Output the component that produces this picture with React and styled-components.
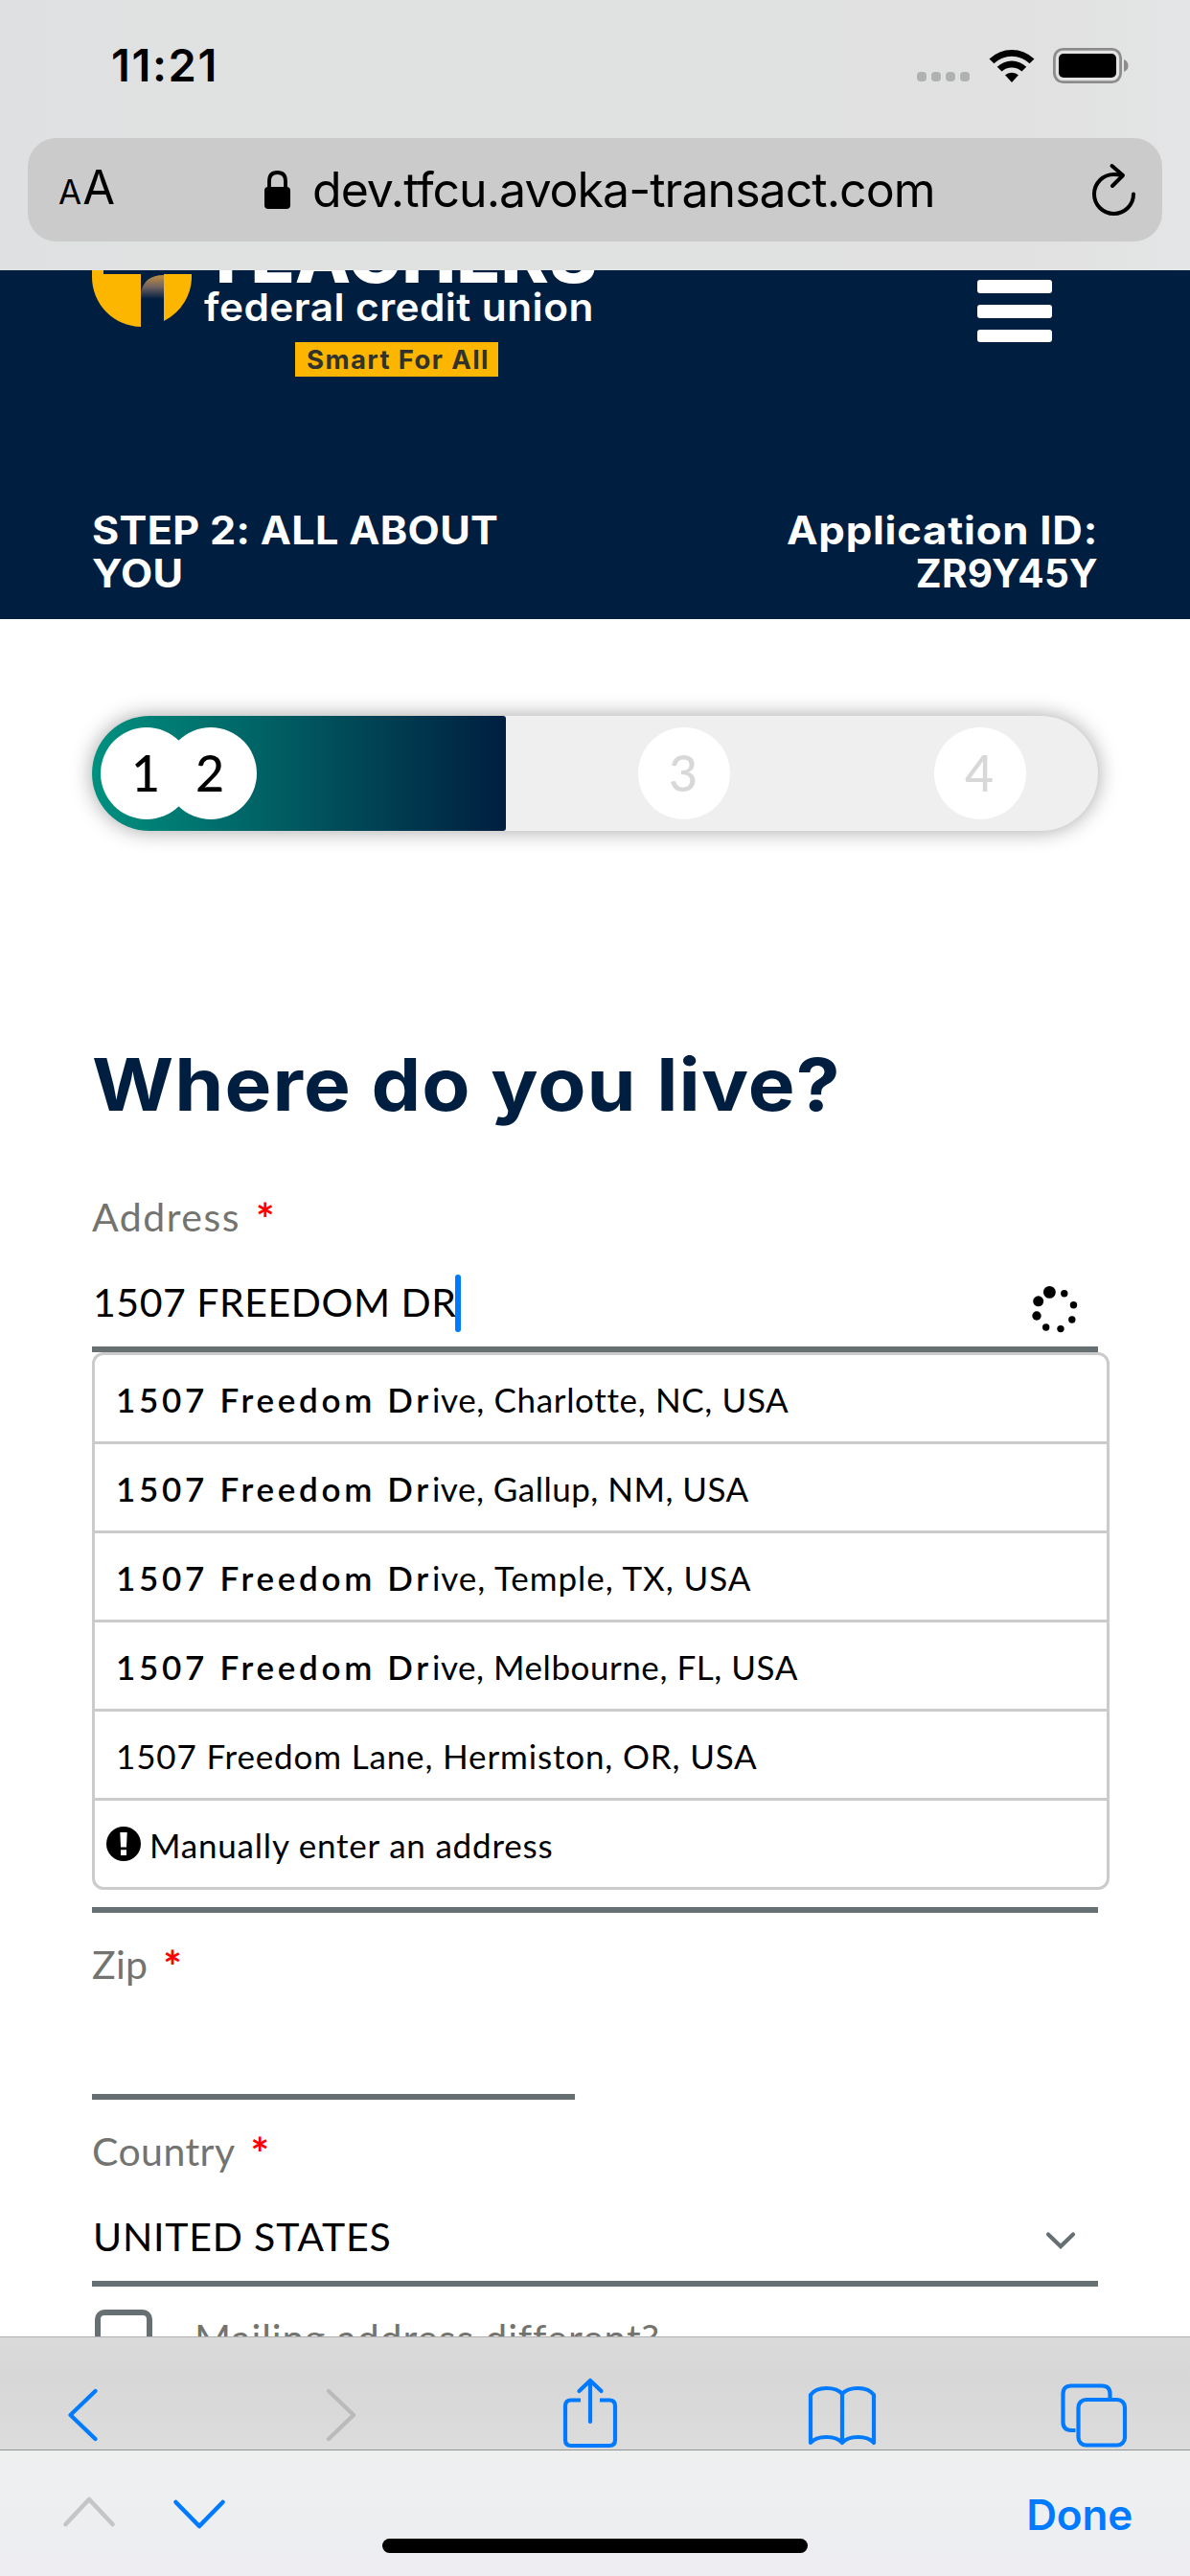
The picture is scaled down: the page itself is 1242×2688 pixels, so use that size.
import React from "react";
import styled, { createGlobalStyle } from "styled-components";

const display = `Inter, "Open Sans", sans-serif`;
const body = `Lato, "Open Sans", sans-serif`;
const navy = "#001e40";
const slate = "#666f71";
const blue = "#007aff";

const Global = createGlobalStyle`
  * { box-sizing: border-box; }
  body { margin: 0; background: #fff; }
`;

const Phone = styled.div`
  width: 1242px;
  height: 2688px;
  display: flex;
  flex-direction: column;
  background: #fff;
  overflow: hidden;
`;

/* ---------- Browser chrome: top ---------- */
const TopChrome = styled.div`
  height: 282px;
  flex: none;
  background: linear-gradient(90deg, #dfe0e1 0, #e0e1e1 160px, #e1e1e1 1080px, #e4e5e6 100%);
`;

const StatusBar = styled.div`
  height: 144px;
  padding: 0 64px 8px 116px;
  display: flex;
  align-items: center;
  justify-content: space-between;
`;

const Clock = styled.span`
  font: 600 47px/60px ${display};
  letter-spacing: 1.6px;
  color: #000;
`;

const StatusIcons = styled.div`
  display: flex;
  align-items: center;
`;

const SignalDots = styled.div`
  display: flex;
  gap: 4.6px;
  margin: 24px 20px 0 0;
`;

const SignalDot = styled.i`
  width: 10.4px;
  height: 10px;
  border-radius: 4px;
  background: #b0b1b1;
`;

const WifiIcon = styled.svg`
  width: 48px;
  height: 37px;
  margin-right: 19px;
`;

const BatteryIcon = styled.svg`
  width: 79px;
  height: 37px;
`;

const AddressBar = styled.div`
  height: 108px;
  margin: 0 29px;
  padding-right: 29px;
  border-radius: 30px;
  background: #cbcbcc;
  display: grid;
  grid-template-columns: 247px 1fr 44px;
  align-items: center;
  color: #000;
  font-family: ${display};
`;

const TextSize = styled.span`
  padding-left: 32px;
  display: flex;
  align-items: baseline;
  gap: 2px;
  line-height: 60px;
`;

const Glyph = styled.span`
  font-size: ${(p) => p.$size}px;
  letter-spacing: -1px;
`;

const Location = styled.div`
  display: flex;
  align-items: center;
`;

const LockIcon = styled.svg`
  width: 27px;
  height: 40px;
  margin-right: 23px;
`;

const Url = styled.span`
  font-size: 50px;
  line-height: 60px;
  letter-spacing: -0.97px;
  white-space: nowrap;
`;

const ReloadIcon = styled.svg`
  width: 46px;
  height: 56px;
`;

/* ---------- Site header ---------- */
const Viewport = styled.div`
  flex: 1;
  min-height: 0;
  overflow: hidden;
  background: #fff;
`;

const Header = styled.header`
  height: 364px;
  overflow: hidden;
  background: ${navy};
  color: #fff;
  font-family: ${display};
`;

const HeaderTop = styled.div`
  height: 248px;
  padding: 0 144px 0 96px;
  display: flex;
  justify-content: space-between;
  align-items: flex-start;
`;

const Brand = styled.div`
  display: flex;
  align-items: flex-start;
`;

const Emblem = styled.svg`
  width: 104px;
  height: 60px;
  margin-right: 13px;
  flex: none;
`;

const Wordmark = styled.div`
  display: flex;
  flex-direction: column;
  align-items: flex-start;
`;

const BrandName = styled.span`
  margin: -42px 0 0 -3px;
  font-weight: 800;
  font-size: 76px;
  line-height: 54px;
`;

const BrandKind = styled.span`
  margin-top: 7px;
  font-weight: 600;
  font-size: 40px;
  line-height: 40px;
  letter-spacing: 0.4px;
  white-space: nowrap;
  transform: scaleX(1.06);
  transform-origin: left;
`;

const Tagline = styled.span`
  width: 212px;
  height: 36px;
  margin: 16px 0 0 95px;
  padding-left: 12px;
  background: #fcb600;
  color: #32322c;
  font-weight: 700;
  font-size: 27.5px;
  line-height: 37px;
  letter-spacing: 1.4px;
  white-space: nowrap;
`;

const MenuButton = styled.div`
  width: 78px;
  padding-top: 10px;
  display: flex;
  flex-direction: column;
  gap: 12px;
`;

const MenuBar = styled.i`
  height: 13.8px;
  border-radius: 3px;
  background: #fff;
`;

const HeaderInfo = styled.div`
  padding: 1px 96px 0;
  display: flex;
  justify-content: space-between;
  font-weight: 700;
  font-size: 40.5px;
  line-height: 45px;
`;

const StepTitle = styled.div`
  width: 430px;
  letter-spacing: 0.3px;
  transform: scaleX(1.065);
  transform-origin: left;
`;

const AppId = styled.div`
  display: flex;
  flex-direction: column;
  align-items: flex-end;
`;

const AppIdLabel = styled.span`
  letter-spacing: 0.7px;
  transform: scaleX(1.08);
  transform-origin: right;
`;

const AppIdValue = styled.span`
  letter-spacing: 0.3px;
`;

/* ---------- Form ---------- */
const Main = styled.main`
  padding: 101px 96px 0;
`;

const Progress = styled.div`
  height: 120px;
  border-radius: 60px;
  background: #efefef;
  box-shadow: 0 0 22px rgba(0, 0, 0, 0.36);
  display: flex;
  align-items: center;
`;

const ProgressFill = styled.div`
  width: 432px;
  height: 120px;
  padding-left: 9px;
  border-radius: 60px 3px 3px 60px;
  background: linear-gradient(90deg, #00917f, ${navy});
  display: flex;
  align-items: center;
`;

const StepDot = styled.span`
  width: 96px;
  height: 96px;
  flex: none;
  margin-left: ${(p) => p.$offset}px;
  border-radius: 50%;
  background: #fff;
  color: ${(p) => (p.$done ? "#000" : "#d8d8d8")};
  font: 500 52px/94px ${body};
  text-align: center;
  text-indent: -2px;
`;

const Heading = styled.h1`
  margin: 219px 0 70px;
  color: ${navy};
  font: 700 76px/90px ${display};
  letter-spacing: 1px;
  white-space: nowrap;
  transform: scaleX(1.08);
  transform-origin: left;
`;

const Field = styled.div`
  position: relative;
  width: ${(p) => p.$width || "auto"};
  margin-bottom: 30px;
`;

const Label = styled.div`
  height: 48px;
  display: flex;
  color: #73736f;
  font: 400 41px/48px ${body};
  letter-spacing: ${(p) => p.$spacing}px;
`;

const Required = styled.span`
  margin-left: 16px;
  color: #f00;
  font-weight: 700;
  font-size: 46px;
  line-height: 52px;
`;

const Control = styled.div`
  height: 117px;
  padding-top: 19px;
  border-bottom: 6px solid ${slate};
  display: flex;
  align-items: center;
  justify-content: space-between;
  color: #000;
  font: 400 41px/48px ${body};
  letter-spacing: ${(p) => p.$spacing || 0}px;
`;

const Value = styled.span`
  display: flex;
  align-items: center;
  padding-left: 1px;
`;

const Caret = styled.i`
  width: 6px;
  height: 60px;
  margin: 2px 0 0 -2px;
  border-radius: 3px;
  background: ${blue};
`;

const Spinner = styled.svg`
  width: 58px;
  height: 58px;
  margin: 16px 16px 0 0;
`;

const SelectArrow = styled.svg`
  width: 32px;
  height: 20px;
  margin: 8px 23px 0 0;
`;

const Suggestions = styled.ul`
  position: absolute;
  top: 100%;
  left: 0;
  width: 1062px;
  margin: 0;
  padding: 0;
  list-style: none;
  border: 3px solid #cbcbcb;
  border-radius: 12px;
  background: #fff;
`;

const Suggestion = styled.li`
  height: 93px;
  padding: 2px 0 0 ${(p) => (p.$manual ? 12 : 22)}px;
  border-bottom: 3px solid #cbcbcb;
  display: flex;
  align-items: center;
  color: #000;
  font: 400 35px/44px ${body};
  letter-spacing: ${(p) => p.$spacing}px;
  white-space: pre;

  &:last-child {
    height: 90px;
    border-bottom: 0;
  }
`;

const Match = styled.b`
  font-weight: 600;
  letter-spacing: 3.7px;
`;

const AlertIcon = styled.svg`
  width: 36px;
  height: 36px;
  margin: -2px 9px 0 0;
`;

const CoveredFields = styled.div`
  height: 585px;
  margin: -30px 0 30px;
  border-bottom: 6px solid ${slate};
`;

const CheckRow = styled.div`
  margin-top: -6px;
  padding-left: 3px;
  display: flex;
  gap: 44px;
  color: #73736f;
  font: 400 41px/60px ${body};
  letter-spacing: 0.84px;
`;

const Checkbox = styled.span`
  width: 60px;
  height: 60px;
  border: 6px solid ${slate};
  border-radius: 10px;
`;

/* ---------- Browser chrome: bottom ---------- */
const Toolbar = styled.nav`
  height: 118px;
  flex: none;
  padding: 0 67px;
  border-top: 1px solid #b0b0b0;
  background: linear-gradient(#dadada, #d7d7d7 35%, #dcdcdc);
  display: grid;
  grid-template-columns: 269px 248px 256px 263px 1fr;
  align-items: end;
`;

const ToolIcon = styled.svg`
  width: ${(p) => p.$w}px;
  height: 76px;
  fill: none;
  stroke: ${(p) => (p.$muted ? "#bababa" : blue)};
  stroke-width: 4.2;
  stroke-linecap: round;
  stroke-linejoin: round;
`;

const InputAccessory = styled.div`
  height: 132px;
  flex: none;
  border-top: 1px solid #909292;
  background: linear-gradient(#eef0f0, #ededf1);
  display: flex;
  flex-direction: column;
  align-items: center;
`;

const AccessoryRow = styled.div`
  width: 100%;
  height: 92px;
  padding: 42px 60px 0 62px;
  display: flex;
  align-items: center;
`;

const StepArrow = styled.svg`
  width: 62px;
  height: 44px;
  margin-right: 53px;
  fill: none;
  stroke: ${(p) => (p.$muted ? "#c4c5c6" : blue)};
  stroke-width: 4.6;
  stroke-linecap: round;
  stroke-linejoin: round;
`;

const Done = styled.span`
  margin-left: auto;
  color: ${blue};
  font: 600 44px/44px ${display};
  letter-spacing: -0.2px;
`;

const HomeIndicator = styled.i`
  width: 444px;
  height: 15px;
  border-radius: 8px;
  background: #000;
`;

const matches = [
  { rest: "ive, Charlotte, NC, USA", spacing: 0.65 },
  { rest: "ive, Gallup, NM, USA", spacing: 0.5 },
  { rest: "ive, Temple, TX, USA", spacing: 0.95 },
  { rest: "ive, Melbourne, FL, USA", spacing: 0.55 },
];

const spinnerDots = [
  [23.4, 10.4, 6.4],
  [11.7, 19.8, 5.5],
  [10, 35, 4.7],
  [19.7, 47, 3.7],
  [35, 48.6, 3.7],
  [46.8, 39, 3.7],
  [48.5, 23.7, 3.7],
  [38.8, 11.8, 3.7],
];

function FieldLabel({ children, spacing }) {
  return (
    <Label $spacing={spacing}>
      {children}
      <Required>*</Required>
    </Label>
  );
}

export default function App() {
  return (
    <Phone>
      <Global />
      <TopChrome>
        <StatusBar>
          <Clock>11:21</Clock>
          <StatusIcons>
            <SignalDots>
              <SignalDot />
              <SignalDot />
              <SignalDot />
              <SignalDot />
            </SignalDots>
            <WifiIcon viewBox="0 0 48 37">
              <path d="M0.5 11.5 A34 34 0 0 1 47.5 11.5 L42.6 16.3 A27 27 0 0 0 5.4 16.3 Z" />
              <path d="M8.7 19.7 A22.3 22.3 0 0 1 39.3 19.7 L34.4 24.5 A15.3 15.3 0 0 0 13.6 24.5 Z" />
              <path d="M17 28.3 A10.5 10.5 0 0 1 31 28.3 L24 36 Z" />
            </WifiIcon>
            <BatteryIcon viewBox="0 0 79 37">
              <rect x="1.4" y="1.4" width="69.2" height="34.2" rx="9" fill="none" stroke="#8c8c8c" strokeWidth="2.8" />
              <rect x="6" y="6" width="60" height="25" rx="5" />
              <path d="M74 12 Q78.5 14 78.5 18.5 Q78.5 23 74 25 Z" fill="#8c8c8c" />
            </BatteryIcon>
          </StatusIcons>
        </StatusBar>
        <AddressBar>
          <TextSize>
            <Glyph $size={35}>A</Glyph>
            <Glyph $size={49}>A</Glyph>
          </TextSize>
          <Location>
            <LockIcon viewBox="0 0 27 40">
              <rect x="0" y="17" width="27" height="23" rx="4" />
              <path d="M5 18 V11 Q5 2 13.5 2 Q22 2 22 11 V18" fill="none" stroke="#000" strokeWidth="3.8" />
            </LockIcon>
            <Url>dev.tfcu.avoka-transact.com</Url>
          </Location>
          <ReloadIcon viewBox="0 0 46 56" fill="none" stroke="#000" strokeWidth="4" strokeLinecap="round" strokeLinejoin="round">
            <path d="M31 12.8 Q27 12 22.5 12 A20.5 20.5 0 1 0 43 32.5" />
            <path d="M20.5 3 L32 13 L21 24" />
          </ReloadIcon>
        </AddressBar>
      </TopChrome>

      <Viewport>
        <Header>
          <HeaderTop>
            <Brand>
              <Emblem viewBox="0 0 104 60">
                <defs>
                  <linearGradient id="pageFade" x1="0" y1="0" x2="0" y2="1">
                    <stop offset="0" stopColor="#c08f3f" />
                    <stop offset="0.5" stopColor="#6f6260" />
                    <stop offset="1" stopColor={navy} />
                  </linearGradient>
                </defs>
                <path d="M0 0 H12 V4 H51 V59 A52 52 0 0 1 0 7 Z" fill="#fcb600" />
                <path d="M75 4 H104 A52 52 0 0 1 75 53 Z" fill="#fcb600" />
                <path d="M51 30 V24 Q54 5 75 5 V30 Z" fill="url(#pageFade)" />
              </Emblem>
              <Wordmark>
                <BrandName>TEACHERS</BrandName>
                <BrandKind>federal credit union</BrandKind>
                <Tagline>Smart For All</Tagline>
              </Wordmark>
            </Brand>
            <MenuButton>
              <MenuBar />
              <MenuBar />
              <MenuBar />
            </MenuButton>
          </HeaderTop>
          <HeaderInfo>
            <StepTitle>STEP 2: ALL ABOUT YOU</StepTitle>
            <AppId>
              <AppIdLabel>Application ID:</AppIdLabel>
              <AppIdValue>ZR9Y45Y</AppIdValue>
            </AppId>
          </HeaderInfo>
        </Header>

        <Main>
          <Progress>
            <ProgressFill>
              <StepDot $done $offset={0}>1</StepDot>
              <StepDot $done $offset={-29}>2</StepDot>
            </ProgressFill>
            <StepDot $offset={138}>3</StepDot>
            <StepDot $offset={213}>4</StepDot>
          </Progress>

          <Heading>Where do you live?</Heading>

          <Field>
            <FieldLabel spacing={1.5}>Address</FieldLabel>
            <Control $spacing={0.55}>
              <Value>
                1507 FREEDOM DR
                <Caret />
              </Value>
              <Spinner viewBox="0 0 58 58">
                {spinnerDots.map(([cx, cy, r]) => (
                  <circle key={`${cx}-${cy}`} cx={cx} cy={cy} r={r} />
                ))}
              </Spinner>
            </Control>
            <Suggestions>
              {matches.map((m) => (
                <Suggestion key={m.rest} $spacing={m.spacing}>
                  <Match>1507 Freedom Dr</Match>
                  {m.rest}
                </Suggestion>
              ))}
              <Suggestion $spacing={0.85}>1507 Freedom Lane, Hermiston, OR, USA</Suggestion>
              <Suggestion $manual $spacing={0.8}>
                <AlertIcon viewBox="0 0 36 36">
                  <circle cx="18" cy="18" r="18" />
                  <path d="M14.3 6 H21.7 L21 21.5 H15 Z M15 24.3 H21 V30 H15 Z" fill="#fff" />
                </AlertIcon>
                Manually enter an address
              </Suggestion>
            </Suggestions>
          </Field>

          <CoveredFields />

          <Field $width="504px">
            <FieldLabel spacing={0.3}>Zip</FieldLabel>
            <Control />
          </Field>

          <Field>
            <FieldLabel spacing={0.45}>Country</FieldLabel>
            <Control $spacing={0.8}>
              <Value>UNITED STATES</Value>
              <SelectArrow viewBox="0 0 32 20" fill="none" stroke={slate} strokeWidth="4.2" strokeLinecap="round">
                <path d="M3 3.5 L16 16 L29 3.5" />
              </SelectArrow>
            </Control>
          </Field>

          <CheckRow>
            <Checkbox />
            Mailing address different?
          </CheckRow>
        </Main>
      </Viewport>

      <Toolbar>
        <ToolIcon $w={38} viewBox="0 0 38 76">
          <path d="M32.5 15 L6.5 40 L32.5 65" />
        </ToolIcon>
        <ToolIcon $w={38} $muted viewBox="0 0 38 76">
          <path d="M7 15 L33 40 L7 65" />
        </ToolIcon>
        <ToolIcon $w={64} viewBox="0 0 64 76">
          <path d="M22 24.5 H12 Q6 24.5 6 30.5 V66 Q6 72 12 72 H52 Q58 72 58 66 V30.5 Q58 24.5 52 24.5 H42" strokeLinecap="butt" />
          <path d="M32 47 V4 M20.5 15 L32 4 L43.5 15" />
        </ToolIcon>
        <ToolIcon $w={78} viewBox="0 0 78 76">
          <path d="M39 18 Q34 12 22.5 12 Q11 12 6 19 V69 Q11 63 22.5 63 Q34 63 39 69 Q44 63 55.5 63 Q67 63 72 69 V19 Q67 12 55.5 12 Q44 12 39 18 V69" />
        </ToolIcon>
        <ToolIcon $w={76} viewBox="0 0 76 76">
          <path d="M19.5 56 H15 Q6.5 56 6.5 47.5 V18 Q6.5 9.5 15 9.5 H47 Q55.5 9.5 55.5 18 V24" strokeLinecap="butt" />
          <rect x="22.5" y="24" width="48.5" height="47.5" rx="8" />
        </ToolIcon>
      </Toolbar>

      <InputAccessory>
        <AccessoryRow>
          <StepArrow $muted viewBox="0 0 62 44">
            <path d="M6.5 32 L31 6 L55.5 32" />
          </StepArrow>
          <StepArrow viewBox="0 0 62 44">
            <path d="M6.5 9 L31 34 L55.5 9" />
          </StepArrow>
          <Done>Done</Done>
        </AccessoryRow>
        <HomeIndicator />
      </InputAccessory>
    </Phone>
  );
}
